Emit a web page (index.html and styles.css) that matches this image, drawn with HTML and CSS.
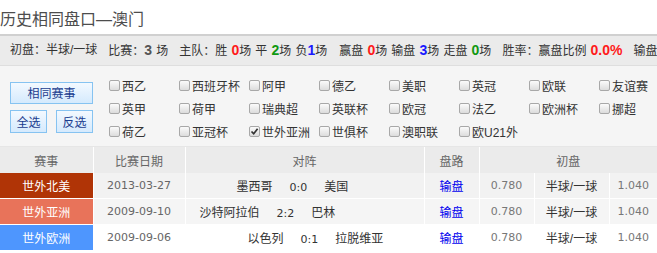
FILE: index.html
```html
<!DOCTYPE html>
<html lang="zh-CN">

<head>
    <meta charset="UTF-8">
    <title>历史相同盘口</title>
    <link rel="stylesheet" href="styles.css">
</head>

<body>
    <h2 class="title">历史相同盘口—澳门</h2>

    <div class="stats">
        <span>初盘：半球/一球</span>
        <span>比赛：<b class="n gray">3</b> 场</span>
        <span>主队：胜 <b class="n red">0</b>场 平 <b class="n green">2</b>场 负<b class="n blue">1</b>场</span>
        <span class="wide">赢盘 <b class="n red">0</b>场 输盘 <b class="n blue">3</b>场 走盘 <b class="n green">0</b>场</span>
        <span>胜率：赢盘比例 <b class="n red">0.0%</b></span>
        <span>输盘比例 <b class="n blue">100.0%</b></span>
    </div>

    <div class="filter">
        <div class="filter-btns">
            <button class="btn btn-wide">相同赛事</button>
            <div class="btn-row">
                <button class="btn">全选</button>
                <button class="btn">反选</button>
            </div>
        </div>
        <div class="filter-sep"></div>
        <ul class="league-list">
            <li><span class="cb"></span>西乙</li>
            <li><span class="cb"></span>西班牙杯</li>
            <li><span class="cb"></span>阿甲</li>
            <li><span class="cb"></span>德乙</li>
            <li><span class="cb"></span>美职</li>
            <li><span class="cb"></span>英冠</li>
            <li><span class="cb"></span>欧联</li>
            <li><span class="cb"></span>友谊赛</li>
            <li><span class="cb"></span>英甲</li>
            <li><span class="cb"></span>荷甲</li>
            <li><span class="cb"></span>瑞典超</li>
            <li><span class="cb"></span>英联杯</li>
            <li><span class="cb"></span>欧冠</li>
            <li><span class="cb"></span>法乙</li>
            <li><span class="cb"></span>欧洲杯</li>
            <li><span class="cb"></span>挪超</li>
            <li><span class="cb"></span>荷乙</li>
            <li><span class="cb"></span>亚冠杯</li>
            <li><span class="cb on"><svg viewBox="0 0 9 9" width="9" height="9"><path d="M1.5 4.5 L3.7 6.8 L7.6 1.8" fill="none" stroke="#333" stroke-width="1.7"/></svg></span>世外亚洲</li>
            <li><span class="cb"></span>世俱杯</li>
            <li><span class="cb"></span>澳职联</li>
            <li><span class="cb"></span>欧U21外</li>
        </ul>
    </div>

    <table class="his">
        <colgroup>
            <col class="c-league">
            <col class="c-date">
            <col class="c-vs">
            <col class="c-lu">
            <col class="c-odd">
            <col class="c-pk">
            <col class="c-odd2">
        </colgroup>
        <thead>
            <tr>
                <th>赛事</th>
                <th>比赛日期</th>
                <th>对阵</th>
                <th>盘路</th>
                <th colspan="3">初盘</th>
            </tr>
        </thead>
        <tbody>
            <tr class="row-a">
                <td class="lg lg-na">世外北美</td>
                <td class="num date">2013-03-27</td>
                <td class="vs vs-1">墨西哥<span class="score">0:0</span>美国</td>
                <td class="lu">输盘</td>
                <td class="num">0.780</td>
                <td>半球/一球</td>
                <td class="num">1.040</td>
            </tr>
            <tr class="row-b">
                <td class="lg lg-as">世外亚洲</td>
                <td class="num date">2009-09-10</td>
                <td class="vs vs-2">沙特阿拉伯<span class="score">2:2</span>巴林</td>
                <td class="lu">输盘</td>
                <td class="num">0.780</td>
                <td>半球/一球</td>
                <td class="num">1.040</td>
            </tr>
            <tr class="row-c">
                <td class="lg lg-eu">世外欧洲</td>
                <td class="num date">2009-09-06</td>
                <td class="vs vs-3">以色列<span class="score">0:1</span>拉脱维亚</td>
                <td class="lu">输盘</td>
                <td class="num">0.780</td>
                <td>半球/一球</td>
                <td class="num">1.040</td>
            </tr>
        </tbody>
    </table>
</body>

</html>
```

FILE: styles.css
```css
body {
    margin: 0;
    width: 657px;
    overflow: hidden;
    font-family: "Liberation Sans", "Noto Sans CJK SC", sans-serif;
    font-size: 12px;
    color: #333;
    background: #fff;
}

.title {
    margin: 0;
    height: 34px;
    box-sizing: border-box;
    padding-top: 8px;
    font-size: 16px;
    font-weight: normal;
    line-height: 24px;
    color: #4d4d4d;
}

/* stats bar */
.stats {
    display: flex;
    gap: 11px;
    height: 32px;
    box-sizing: border-box;
    padding-left: 10px;
    border-top: 2px solid #d0d0d0;
    border-bottom: 1px solid #dedede;
    background: #ebebeb;
    line-height: 29px;
    word-spacing: 0.8px;
    white-space: nowrap;
    overflow: hidden;
}

.stats span {
    flex-shrink: 0;
}

.stats .wide {
    margin-left: 1px;
}

.n {
    font-size: 14px;
}

.gray {
    color: #555;
}

.red {
    color: #ff1a1a;
}

.green {
    color: #119911;
}

.blue {
    color: #1a1aff;
}

/* filter */
.filter {
    display: flex;
    align-items: flex-start;
    height: 81px;
    box-sizing: border-box;
    padding-left: 10px;
    background: #f5f5f5;
    border-bottom: 1px solid #e6e6e6;
}

.filter-btns {
    width: 83px;
    margin-top: 16px;
}

.btn {
    display: block;
    height: 22px;
    box-sizing: border-box;
    padding: 0;
    border: 1px solid #86c3f1;
    background: linear-gradient(#f3f9ff, #d5eafd);
    color: #1b3d8f;
    font-family: "Noto Sans CJK SC", sans-serif;
    font-size: 12px;
    line-height: 20px;
    text-align: center;
}

.btn-wide {
    width: 83px;
}

.btn-row {
    display: flex;
    justify-content: space-between;
    margin-top: 6px;
}

.btn-row .btn {
    width: 37px;
    height: 23px;
}

.filter-sep {
    width: 1px;
    height: 70px;
    margin: 6px 0 0 7px;
    background: #bcdaf4;
}

.league-list {
    display: grid;
    grid-template-columns: repeat(8, 70px);
    grid-auto-rows: 23px;
    margin: 0 0 0 9px;
    padding: 8px 0 0;
    list-style: none;
}

.league-list li {
    display: flex;
    align-items: center;
    white-space: nowrap;
    color: #333;
}

.cb {
    display: inline-flex;
    align-items: center;
    justify-content: center;
    width: 11px;
    height: 11px;
    box-sizing: border-box;
    margin-right: 2px;
    border: 1px solid #a8a8a8;
    border-radius: 2px;
    background: linear-gradient(#fbfbfb, #dcdcdc);
}

.cb svg {
    display: block;
}

/* history table */
.his {
    width: 657px;
    border-collapse: collapse;
    table-layout: fixed;
}

.c-league {
    width: 93px;
}

.c-date {
    width: 92px;
}

.c-vs {
    width: 239px;
}

.c-lu {
    width: 55px;
}

.c-odd {
    width: 55px;
}

.c-pk {
    width: 75px;
}

.c-odd2 {
    width: 48px;
}

.his th,
.his td {
    padding: 0;
    border-right: 1px solid #fff;
    text-align: center;
    white-space: nowrap;
    overflow: hidden;
}

.his th:last-child,
.his td:last-child {
    border-right: none;
}

.his th {
    height: 26px;
    background: #ebebeb;
    color: #666;
    font-weight: normal;
}

.his td {
    height: 25px;
    border-bottom: 1px solid #fff;
}

.row-a td {
    background: #f2f2f2;
}

.row-b td {
    background: #f5f5f5;
}

.row-c td {
    background: #fff;
}

.his .lg {
    color: #fff;
}

.his .lg-na {
    background: #b03406;
}

.his .lg-as {
    background: #e8735a;
}

.his .lg-eu {
    background: #4e96fe;
}

.num {
    font-family: "DejaVu Sans", sans-serif;
    font-size: 11px;
    color: #777;
}

.date {
    color: #666;
}

.vs {
    text-align: left !important;
    color: #333;
}

.vs-1 {
    padding-left: 51px !important;
}

.vs-2 {
    padding-left: 14px !important;
}

.vs-3 {
    padding-left: 62px !important;
}

.score {
    margin: 0 17px;
    font-family: "DejaVu Sans", sans-serif;
    font-size: 11px;
    color: #333;
}

.lu {
    color: #0000ee;
}
```
